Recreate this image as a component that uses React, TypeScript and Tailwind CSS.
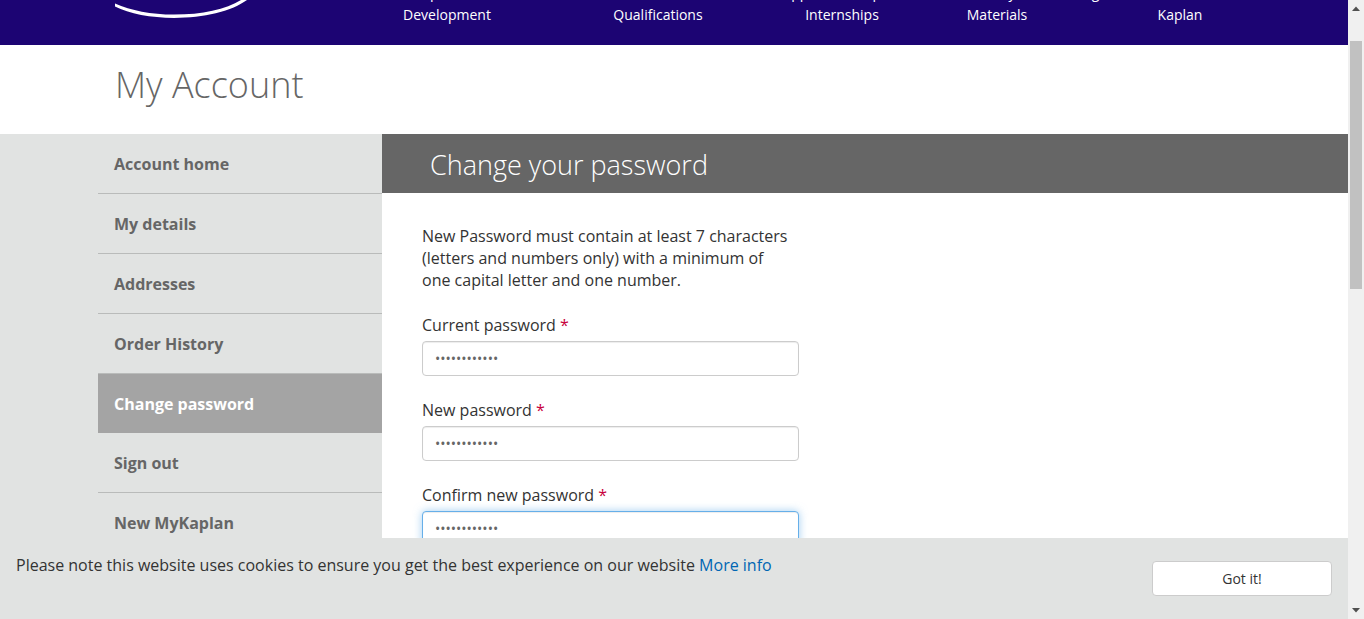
import React from "react";

const navItems = [
  ["Corporate &", "Development"],
  ["Professional", "Qualifications"],
  ["Apprenticeships &", "Internships"],
  ["Study", "Materials"],
  ["Blog", "\u00a0"],
  ["About", "Kaplan"],
];

const accountLinks = [
  "Account home",
  "My details",
  "Addresses",
  "Order History",
  "Change password",
  "Sign out",
  "New MyKaplan",
];

const fields = [
  { id: "current", label: "Current password", active: false },
  { id: "new", label: "New password", active: false },
  { id: "confirm", label: "Confirm new password", active: true },
];

function Header() {
  return (
    <header className="h-[45px] overflow-hidden bg-[#1c0473] text-white">
      <div className="mx-auto flex h-full w-full max-w-[1152px]">
        <a href="#home" aria-label="Kaplan" className="block w-[230px] shrink-0 pl-4">
          <svg width="140" height="20" viewBox="0 0 140 20" fill="#fff" aria-hidden="true">
            <path d="M1 3.5C17 10.5 37 14.5 60 14.6C88 14.6 112 9.5 127 0L133 0C117 11.5 90 17.9 60 17.9C37 17.8 15 13.8 1 6.5Z" />
          </svg>
        </a>
        <nav className="grid flex-1 grid-cols-[238fr_184fr_184fr_126fr_50fr_140fr] content-end pb-[19px]">
          {navItems.map(([top, bottom]) => (
            <a key={top} href="#nav" className="text-center text-sm leading-[22px] whitespace-nowrap">
              {top}
              <br />
              {bottom}
            </a>
          ))}
        </nav>
      </div>
    </header>
  );
}

function Sidebar() {
  return (
    <aside className="flex w-[382px] shrink-0 justify-end bg-[#e1e3e2]">
      <ul className="w-[284px]">
        {accountLinks.map((name) => (
          <li key={name}>
            <a
              href="#account"
              className={
                name === "Change password"
                  ? "block bg-[#a4a4a4] px-4 pt-0.5 text-base leading-[57px] font-bold text-white"
                  : "block border-b border-[#b9bbba] px-4 pt-0.5 text-base leading-[57px] font-bold text-[#666]"
              }
            >
              {name}
            </a>
          </li>
        ))}
      </ul>
    </aside>
  );
}

function PasswordForm() {
  return (
    <main className="flex-1 bg-white">
      <h2 className="bg-[#666] pt-0.5 pl-12 text-[27px] leading-[57px] font-light text-white">
        Change your password
      </h2>
      <form className="w-[417px] pt-8 pl-10 text-base leading-[22px]">
        <p className="mb-[23px] pr-1">
          New Password must contain at least 7 characters (letters and numbers only) with a minimum of one capital
          letter and one number.
        </p>
        {fields.map((f) => (
          <div key={f.id} className="mb-[23px]">
            <label htmlFor={f.id} className="mb-[5px] block">
              {f.label} <span className="text-[#c8003c]">*</span>
            </label>
            <input
              id={f.id}
              type="password"
              defaultValue="Password1234"
              className={
                f.active
                  ? "block h-[35px] w-full rounded border border-[#66afe9] bg-white px-3 text-sm text-[#666] shadow-[inset_0_1px_1px_rgba(0,0,0,0.075),0_0_8px_rgba(102,175,233,0.6)] outline-none"
                  : "block h-[35px] w-full rounded border border-[#ccc] bg-white px-3 text-sm text-[#666] shadow-[inset_0_1px_1px_rgba(0,0,0,0.075)] outline-none"
              }
            />
          </div>
        ))}
      </form>
    </main>
  );
}

function CookieBar() {
  return (
    <div className="absolute inset-x-0 bottom-0 flex h-[81px] items-start justify-between bg-[#e1e3e2] px-4">
      <p className="pt-4 text-base leading-[22px]">
        Please note this website uses cookies to ensure you get the best experience on our website{" "}
        <a href="#cookies" className="text-[#0066b3]">
          More info
        </a>
      </p>
      <button className="mt-[23px] h-[35px] w-[180px] rounded border border-[#ccc] bg-white text-sm">Got it!</button>
    </div>
  );
}

function Scrollbar() {
  return (
    <div className="flex w-4 shrink-0 flex-col items-center bg-[#f0f0f0] text-[#505050]" aria-hidden="true">
      <svg width="16" height="41" viewBox="0 0 16 41" fill="currentColor" className="shrink-0">
        <path d="M8 6.5L12 11H4Z" />
      </svg>
      <div className="h-[40%] w-3 bg-[#c1c1c1]" />
      <svg width="16" height="17" viewBox="0 0 16 17" fill="currentColor" className="mt-auto shrink-0">
        <path d="M4 6H12L8 10.5Z" />
      </svg>
    </div>
  );
}

export default function App() {
  return (
    <div className="flex h-screen overflow-hidden bg-white font-['Open_Sans',sans-serif] text-[#333]">
      <div className="relative min-w-0 flex-1 overflow-hidden">
        <Header />
        <div className="mx-auto max-w-[1152px] px-[17px] py-4">
          <h1 className="h-[57px] text-[36px] leading-[48px] font-light text-[#666]">My Account</h1>
        </div>
        <div className="flex">
          <Sidebar />
          <PasswordForm />
        </div>
        <CookieBar />
      </div>
      <Scrollbar />
    </div>
  );
}
